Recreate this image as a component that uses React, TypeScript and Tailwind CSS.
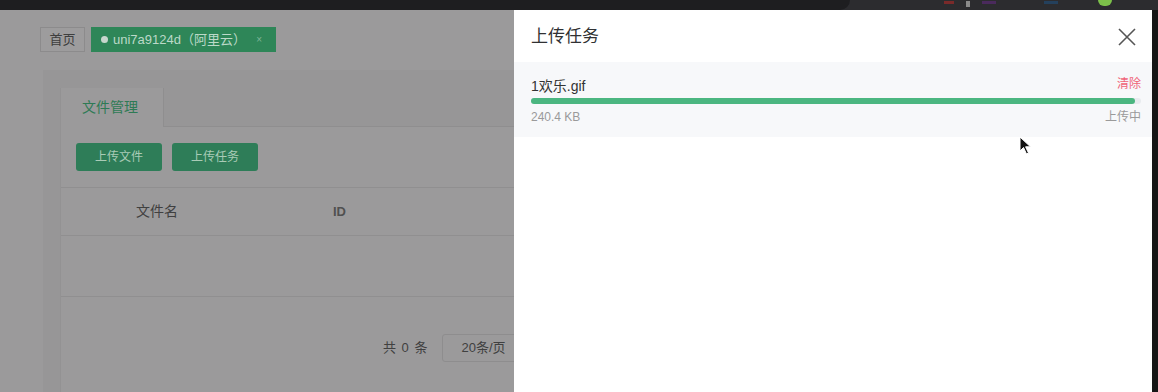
import React from 'react';

const font = { fontFamily: '"Liberation Sans", "Noto Sans CJK SC", sans-serif' };

const Cursor = () => (
  <svg className="absolute left-[1019px] top-[136px]" width="14" height="20" viewBox="0 0 14 20">
    <path d="M1 1 L1 15 L4.5 11.5 L7.5 18 L9.5 17 L6.6 10.8 L11.5 10.8 Z" fill="#111" stroke="#fff" strokeWidth="1" />
  </svg>
);

const TopBar = () => (
  <div className="h-[10px] bg-[#2c2c2f] flex items-center">
    <div className="w-[850px] h-full bg-[#1e1e20] rounded-br-[10px]" />
    <div className="flex items-center gap-[12px] ml-[94px]">
      <span className="w-[10px] h-[3px] bg-[#7a2a2a] mt-[-6px]" />
      <span className="w-[4px] h-[6px] bg-[#8a8a8a] mt-[-2px]" />
      <span className="w-[14px] h-[3px] bg-[#4a2a5c] mt-[-6px]" />
    </div>
    <span className="w-[14px] h-[3px] bg-[#24405c] ml-[48px] mt-[-6px]" />
    <span className="w-[14px] h-[6px] rounded-b-full bg-[#7cc04a] ml-[40px] mt-[-4px]" />
  </div>
);

const Page = () => (
  <div className="w-[514px] shrink-0 bg-[#9b9a9b] overflow-hidden pt-[17px]">
    <div className="flex gap-[6px] pl-[40px] h-[25px]">
      <div className="w-[45px] flex items-center justify-center border border-[#8c8b8c] bg-[#9d9c9d] text-[13px] text-[#3e3e3e]">首页</div>
      <div className="w-[185px] flex items-center bg-[#2e8658] text-[13px] text-[#bcd9c8] pl-[10px]">
        <span className="w-[7px] h-[7px] rounded-full bg-[#c7d6cd] mr-[5px]" />
        <span>uni7a9124d（阿里云）</span>
        <span className="ml-auto mr-[14px] text-[10px] text-[#7fb597]">×</span>
      </div>
    </div>
    <div className="ml-[43px] mt-[18px] w-[600px] h-[400px] bg-[#979697] pt-[18px] pl-[17px]">
      <div className="bg-[#9b9a9b] h-full border-l border-[#939293]">
        <div className="flex h-[39px] bg-[#979697] border-b border-[#8f8e8f]">
          <div className="w-[103px] bg-[#9b9a9b] border-r border-[#8f8e8f] -mb-px flex items-center pl-[21px] text-[14px] text-[#2e7a55]">文件管理</div>
        </div>
        <div className="flex gap-[10px] pl-[15px] pt-[16px] pb-[16px]">
          <div className="w-[86px] h-[28px] rounded-[3px] bg-[#2e7d58] text-[12px] text-[#a9cbb6] flex items-center justify-center">上传文件</div>
          <div className="w-[86px] h-[28px] rounded-[3px] bg-[#2e7d58] text-[12px] text-[#a9cbb6] flex items-center justify-center">上传任务</div>
        </div>
        <div className="h-[49px] border-t border-b border-[#908f90] flex items-center text-[14px] text-[#404040]">
          <span className="ml-[75px] w-[197px]">文件名</span>
          <span className="font-bold text-[13px] text-[#505050]">ID</span>
        </div>
        <div className="h-[61px] border-b border-[#908f90]" />
        <div className="flex items-center mt-[37px] h-[28px]">
          <span className="ml-[322px] text-[13px] text-[#404040] tracking-[1px]">共 0 条</span>
          <div className="ml-[14px] w-[110px] h-[28px] border border-[#8e8d8e] rounded-[3px] flex items-center pl-[18px] text-[13px] text-[#404040]">20条/页</div>
        </div>
      </div>
    </div>
  </div>
);

const Drawer = () => (
  <div className="flex-1 bg-white flex flex-col">
    <div className="h-[52px] flex items-center justify-between pl-[17px] pr-[16px]">
      <span className="text-[17px] text-[#303133] mt-[1px]">上传任务</span>
      <svg width="18" height="18" viewBox="0 0 18 18" className="mt-[1px]">
        <path d="M1 1 L17 17 M17 1 L1 17" stroke="#555" strokeWidth="1.6" />
      </svg>
    </div>
    <div className="bg-[#f7f8fa] h-[75px] pl-[17px] pr-[11px] pt-[13px]">
      <div className="flex justify-between items-start h-[20px]">
        <span className="text-[14px] text-[#333] mt-[1px]">1欢乐.gif</span>
        <span className="text-[12px] text-[#f06478]">清除</span>
      </div>
      <div className="h-[6px] mt-[3px] rounded-full bg-[#e8ebef]">
        <div className="h-full w-[99%] rounded-full bg-[#4bb680]" />
      </div>
      <div className="flex justify-between mt-[4px] text-[12px] text-[#9a9a9a]">
        <span>240.4 KB</span>
        <span>上传中</span>
      </div>
    </div>
  </div>
);

export default function App() {
  return (
    <div className="relative w-[1158px] h-[392px] overflow-hidden flex flex-col" style={font}>
      <TopBar />
      <div className="flex flex-1 min-h-0">
        <Page />
        <Drawer />
        <div className="w-[6px] bg-[#161616]" />
      </div>
      <Cursor />
    </div>
  );
}
